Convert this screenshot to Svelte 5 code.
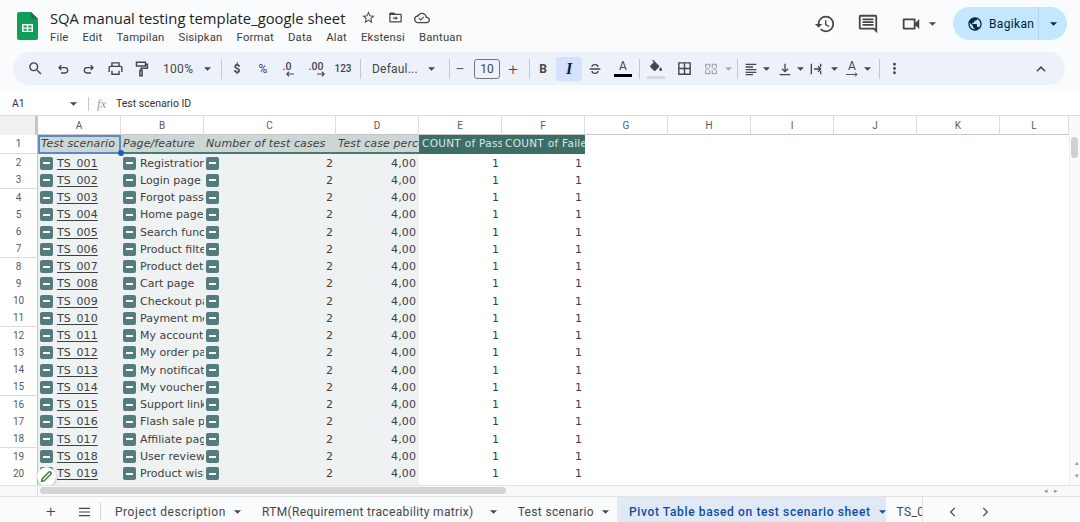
<script>
	const pages = [
		'Registration', 'Login page', 'Forgot password', 'Home page', 'Search function', 'Product filter',
		'Product detail', 'Cart page', 'Checkout page', 'Payment method', 'My account', 'My order page',
		'My notification', 'My voucher', 'Support link', 'Flash sale page', 'Affiliate page', 'User review',
		'Product wishlist', 'Product'
	];
	const menus = ['File', 'Edit', 'Tampilan', 'Sisipkan', 'Format', 'Data', 'Alat', 'Ekstensi', 'Bantuan'];
	const cols = ['A', 'B', 'C', 'D', 'E', 'F', 'G', 'H', 'I', 'J', 'K', 'L'];
	const tabs = [
		{ name: 'Project description' },
		{ name: 'RTM(Requirement traceability matrix)', wide: true },
		{ name: 'Test scenario' },
		{ name: 'Pivot Table based on test scenario sheet', active: true }
	];
	const rows = pages.map((page, i) => ({
		num: i + 2,
		id: 'TS_' + String(i + 1).padStart(3, '0'),
		page
	}));
</script>

{#snippet caret()}
	<svg class="caret" viewBox="0 0 8 4"><path d="M0 0h8L4 4z" /></svg>
{/snippet}

{#snippet chip()}
	<span class="chip"><i></i></span>
{/snippet}

<div class="app">
	<header class="top">
		<svg class="logo" viewBox="0 0 21 28">
			<path fill="#0f9d58" d="M2 0h12l7 7v19a2 2 0 0 1-2 2H2a2 2 0 0 1-2-2V2a2 2 0 0 1 2-2z" />
			<path fill="#0b7a43" d="M14 0l7 7h-5a2 2 0 0 1-2-2z" />
			<path fill="#fff" d="M5 12h11v8H5zm1.5 1.5v2h3.2v-2zm4.8 0v2h3.2v-2zm-4.8 3.2v2h3.2v-2zm4.8 0v2h3.2v-2z" fill-rule="evenodd" />
		</svg>
		<div class="doc">
			<div class="titleline">
				<span class="title">SQA manual testing template_google sheet</span>
				<svg class="ic14 star" viewBox="0 0 24 24"><path d="M22 9.24l-7.19-.62L12 2 9.19 8.63 2 9.24l5.46 4.73L5.82 21 12 17.27 18.18 21l-1.63-7.03L22 9.24zM12 15.4l-3.76 2.27 1-4.28-3.32-2.88 4.38-.38L12 6.1l1.71 4.04 4.38.38-3.32 2.88 1 4.28L12 15.4z" /></svg>
				<svg class="ic14 folder" viewBox="0 0 24 24"><path d="M20 6h-8l-2-2H4c-1.1 0-2 .9-2 2v12c0 1.1.9 2 2 2h16c1.1 0 2-.9 2-2V8c0-1.1-.9-2-2-2zm0 12H4V8h16v10zM12 16l4-3-4-3v2H8v2h4z" /></svg>
				<svg class="ic16 cloud" viewBox="0 0 24 24"><path d="M19.35 10.04C18.67 6.59 15.64 4 12 4 9.11 4 6.6 5.64 5.35 8.04 2.34 8.36 0 10.91 0 14c0 3.31 2.69 6 6 6h13c2.76 0 5-2.24 5-5 0-2.64-2.05-4.78-4.65-4.96zM19 18H6c-2.21 0-4-1.79-4-4 0-2.05 1.53-3.76 3.56-3.97l1.07-.11.5-.95C8.08 7.14 9.94 6 12 6c2.62 0 4.88 1.86 5.39 4.43l.3 1.5 1.53.11c1.56.1 2.78 1.41 2.78 2.96 0 1.65-1.35 3-3 3zM10 13.8L7.9 11.7l-1.1 1.1L10 16l5.2-5.2-1.1-1.1z" /></svg>
			</div>
			<nav class="menu">
				{#each menus as m}<span>{m}</span>{/each}
			</nav>
		</div>
		<div class="actions">
			<svg class="ic20" viewBox="0 0 24 24"><path d="M13 3a9 9 0 0 0-9 9H1l3.89 3.89.07.14L9 12H6c0-3.87 3.13-7 7-7s7 3.13 7 7-3.13 7-7 7c-1.93 0-3.68-.79-4.94-2.06l-1.42 1.42A8.954 8.954 0 0 0 13 21a9 9 0 0 0 0-18zm-1 5v5l4.28 2.54.72-1.21-3.5-2.08V8H12z" /></svg>
			<svg class="ic20 comment" viewBox="0 0 24 24"><path d="M21.99 4c0-1.1-.89-2-1.99-2H4c-1.1 0-2 .9-2 2v12c0 1.1.9 2 2 2h14l4 4-.01-18zM20 4v13.17L18.83 16H4V4h16zM6 12h12v2H6zm0-3h12v2H6zm0-3h12v2H6z" /></svg>
			<svg class="ic20 video" viewBox="0 0 24 24"><path d="M15 8v8H5V8h10m1-2H4c-.55 0-1 .45-1 1v10c0 .55.45 1 1 1h12c.55 0 1-.45 1-1v-3.5l4 4v-11l-4 4V7c0-.55-.45-1-1-1z" /></svg>
			<span class="videocaret">{@render caret()}</span>
			<div class="share">
				<div class="sharemain">
					<svg class="ic16" viewBox="0 0 24 24"><path d="M12 2C6.48 2 2 6.48 2 12s4.48 10 10 10 10-4.48 10-10S17.52 2 12 2zm-1 17.93c-3.95-.49-7-3.85-7-7.93 0-.62.08-1.21.21-1.79L9 15v1c0 1.1.9 2 2 2v1.93zm6.9-2.54c-.26-.81-1-1.39-1.9-1.39h-1v-3c0-.55-.45-1-1-1H8v-2h2c.55 0 1-.45 1-1V7h2c1.1 0 2-.9 2-2v-.41c2.93 1.19 5 4.06 5 7.41 0 2.08-.8 3.97-2.1 5.39z" /></svg>
					<span>Bagikan</span>
				</div>
				<div class="sharecaret">{@render caret()}</div>
			</div>
		</div>
	</header>

	<div class="toolbar">
		<span class="b w27"><svg class="ic18" viewBox="0 0 24 24"><path d="M15.5 14h-.79l-.28-.27A6.471 6.471 0 0 0 16 9.5 6.5 6.5 0 1 0 9.5 16c1.61 0 3.09-.59 4.23-1.57l.27.28v.79l5 4.99L20.49 19l-4.99-5zm-6 0C7.01 14 5 11.99 5 9.5S7.01 5 9.5 5 14 7.01 14 9.5 11.99 14 9.5 14z" /></svg></span>
		<span class="b w27"><svg class="st" viewBox="0 0 24 24"><path d="M9 18h6a4 4 0 0 0 0-8H6M9.500 6.500 6 10l3.500 3.500" /></svg></span>
		<span class="b w25"><svg class="st" viewBox="0 0 24 24"><path d="M15 18H9a4 4 0 0 1 0-8h9M14.500 6.500 18 10l-3.500 3.500" /></svg></span>
		<span class="b w28"><svg class="ic18" viewBox="0 0 24 24"><path d="M19 8h-1V3H6v5H5c-1.660 0-3 1.340-3 3v6h4v4h12v-4h4v-6c0-1.660-1.340-3-3-3zM8 5h8v3H8V5zm8 14H8v-4h8v4zm2-2v-2H6v2H4v-6c0-.55.45-1 1-1h14c.55 0 1 .45 1 1v6h-2z" /></svg></span>
		<span class="b w24"><svg class="st big" viewBox="0 0 24 24"><path d="M6 3h12v5H6zM18 5.500h2.500V11H12v3M10.500 14h3v7h-3z" /></svg></span>
		<span class="b zoom">100%</span>
		<span class="b w15">{@render caret()}</span>
		<i class="sep m7"></i>
		<span class="b w30 txt bold">$</span>
		<span class="b w22 txt">%</span>
		<span class="b w26 dec">.0<svg viewBox="0 0 10 6"><path d="M10 3H2M4.500.5 2 3l2.500 2.500" /></svg></span>
		<span class="b w32 dec">.00<svg viewBox="0 0 10 6"><path d="M0 3h8M5.500.5 8 3 5.500 5.500" /></svg></span>
		<span class="b w22 txt small">123</span>
		<i class="sep m6"></i>
		<span class="b font">Defaul...</span>
		<span class="b w14">{@render caret()}</span>
		<i class="sep m11"></i>
		<span class="b w20 sign">−</span>
		<span class="size">10</span>
		<span class="b w20 sign m3">+</span>
		<i class="sep m6"></i>
		<span class="b w26 txt bold">B</span>
		<span class="b w26 ital">I</span>
		<span class="b w26"><svg class="st" viewBox="0 0 24 24"><path d="M4 12h16M16.500 9c0-2-2-3.500-4.500-3.500S7.500 7 7.500 8.500M7.500 15c0 2 2 3.500 4.500 3.500s4.500-1.500 4.500-3.500" /></svg></span>
		<span class="b w26 m2 colorA">A<i></i></span>
		<i class="sep m3"></i>
		<span class="b w26 m3 fill"><svg class="ic16" viewBox="0 0 24 22"><path d="M16.560 8.940 7.620 0 6.210 1.410l2.380 2.380-5.150 5.150c-.59.59-.59 1.540 0 2.120l5.500 5.500c.29.29.68.44 1.060.44s.77-.15 1.060-.44l5.500-5.500c.59-.58.59-1.530 0-2.120zM19 11.500s-2 2.170-2 3.500c0 1.100.9 2 2 2s2-.9 2-2c0-1.330-2-3.500-2-3.500z" /></svg><i></i></span>
		<span class="b w26 m2"><svg class="ic18" viewBox="0 0 24 24"><path d="M3 3v18h18V3H3zm8 16H5v-6h6v6zm0-8H5V5h6v6zm8 8h-6v-6h6v6zm0-8h-6V5h6v6z" /></svg></span>
		<span class="b w26 m1 off"><svg class="st" viewBox="0 0 24 24"><path d="M4 10V5h6v5M14 10V5h6v5M4 14v5h6v-5M14 14v5h6v-5M4 12h5M15 12h5" /></svg></span>
		<span class="b w8 off">{@render caret()}</span>
		<i class="sep m5"></i>
		<span class="b w22 m2"><svg class="st" viewBox="0 0 24 24"><path d="M4 5h16M4 9h11M4 13h16M4 17h16M4 20.500h11" /></svg></span>
		<span class="b w8">{@render caret()}</span>
		<span class="b w22 m4"><svg class="st" viewBox="0 0 24 24"><path d="M12 4v12M7.500 11.500 12 16l4.500-4.500M4 20.500h16" /></svg></span>
		<span class="b w8">{@render caret()}</span>
		<span class="b w22 m1"><svg class="st" viewBox="0 0 24 24"><path d="M5 4v16M19 4v5M19 15v5M9 12h10M15 8l4 4-4 4" /></svg></span>
		<span class="b w8 m3">{@render caret()}</span>
		<span class="b w22 m3 rot">A<svg viewBox="0 0 14 5"><path d="M0 2.500h12M9.500.5l2.500 2-2.500 2" /></svg></span>
		<span class="b w8">{@render caret()}</span>
		<i class="sep m8"></i>
		<span class="b w20 m4"><svg class="ic18" viewBox="0 0 24 24"><path d="M12 8a2 2 0 1 0 0-4 2 2 0 0 0 0 4zm0 2a2 2 0 1 0 0 4 2 2 0 0 0 0-4zm0 6a2 2 0 1 0 0 4 2 2 0 0 0 0-4z" /></svg></span>
		<span class="b w20 collapse"><svg class="st big" viewBox="0 0 24 24"><path d="M6.500 15 12 9.500l5.500 5.500" /></svg></span>
	</div>

	<div class="formula">
		<span class="cellref">A1</span>
		<span class="refcaret">{@render caret()}</span>
		<i class="fsep"></i>
		<span class="fx">fx</span>
		<span class="ftext">Test scenario ID</span>
	</div>

	<div class="sheet">
		<div class="grid colhead">
			<div class="corner"></div>
			{#each cols as c}<div class="ch">{c}</div>{/each}
			<div class="vtop"></div>
		</div>

		<div class="body">
			<div class="cells">
				<div class="grid row head">
					<div class="rh">1</div>
					<div class="hc sel">Test scenario ID</div>
					<div class="hc">Page/feature</div>
					<div class="hc">Number of test cases</div>
					<div class="hc">Test case percentage</div>
					<div class="hc dark">COUNT of Passed</div>
					<div class="hc dark">COUNT of Failed</div>
				</div>
				{#each rows as r}
					<div class="grid row">
						<div class="rh">{r.num}</div>
						<div class="c tint">{@render chip()}<u>{r.id}</u></div>
						<div class="c tint page">{@render chip()}<span class="clip">{r.page}</span></div>
						<div class="c tint split">{@render chip()}<span>2</span></div>
						<div class="c tint end">4,00</div>
						<div class="c end">1</div>
						<div class="c end">1</div>
					</div>
				{/each}
				<span class="handle"></span>
				<span class="pencil">
					<svg viewBox="0 0 24 24"><path d="M3 21l1.200-5L16.500 3.700a1.800 1.800 0 0 1 2.500 0l1.300 1.300a1.800 1.800 0 0 1 0 2.500L8 19.800z" /></svg>
				</span>
			</div>
			<div class="vscroll"><i class="vthumb"></i><span class="varrows">▴<br />▾</span></div>
		</div>

		<div class="hscroll">
			<div class="hleft"></div>
			<i class="hthumb"></i>
			<span class="harrows">◂ ▸</span>
		</div>
	</div>

	<footer class="tabs">
		<span class="add">+</span>
		<svg class="all" viewBox="0 0 14 10"><path d="M1 1h12M1 5h12M1 9h12" /></svg>
		<i class="tsep"></i>
		{#each tabs as t}
			<div class="tab" class:active={t.active} class:wide={t.wide}>
				<span>{t.name}</span>{@render caret()}
			</div>
		{/each}
		<div class="tab cut"><span>TS_001</span></div>
		<div class="nav">
			<svg viewBox="0 0 24 24"><path d="M15 5l-7 7 7 7" /></svg>
			<svg viewBox="0 0 24 24"><path d="M9 5l7 7-7 7" /></svg>
		</div>
	</footer>
</div>

<style>
	:global(body) {
		margin: 0;
		background: #f9fbfd;
	}

	.app {
		width: 1080px;
		height: 522px;
		overflow: hidden;
		display: flex;
		flex-direction: column;
		font-family: Roboto, 'Noto Sans', sans-serif;
		color: #444746;
		background: #f9fbfd;
	}

	svg {
		fill: #444746;
		display: block;
		flex: none;
	}

	.ic14 { width: 15px; height: 15px; }
	.ic16 { width: 16px; height: 16px; }
	.ic18 { width: 17px; height: 17px; }
	.ic20 { width: 22px; height: 22px; }

	.caret {
		width: 7px;
		height: 4px;
	}

	/* title bar */
	.top {
		height: 52px;
		flex: none;
		display: flex;
		padding-left: 17px;
		box-sizing: border-box;
	}

	.logo {
		width: 21px;
		height: 28px;
		margin-top: 12px;
	}

	.doc {
		margin-left: 12px;
	}

	.titleline {
		display: flex;
		align-items: center;
		height: 21px;
		margin-top: 7px;
	}

	.title {
		font-family: 'Open Sans', sans-serif;
		font-size: 14.800px;
		color: #1f1f1f;
		width: 310px;
		white-space: nowrap;
	}

	.star { margin-left: 1px; }
	.folder { margin-left: 12px; }
	.cloud { margin-left: 11px; }

	.menu {
		display: flex;
		gap: 14px;
		font-size: 11.300px;
		letter-spacing: 0.2px;
		margin-top: 1px;
		height: 17px;
		line-height: 17px;
		color: #3c4043;
	}

	.actions {
		margin-left: auto;
		margin-right: 13px;
		display: flex;
		align-items: center;
		height: 33px;
		margin-top: 7px;
	}

	.comment { margin-left: 21px; }
	.video { margin-left: 21px; }
	.videocaret { margin-left: 7px; }

	.share {
		margin-left: 17px;
		width: 114px;
		height: 33px;
		border-radius: 17px;
		background: #c2e7ff;
		display: flex;
		color: #001d35;
	}

	.sharemain {
		width: 86px;
		padding-left: 14px;
		box-sizing: border-box;
		display: flex;
		align-items: center;
		gap: 6px;
		font-size: 12px;
		letter-spacing: 0.35px;
		border-right: 1px solid #aed6f1;
	}

	.share svg { fill: #0b2a40; }

	.sharecaret {
		flex: 1;
		display: flex;
		align-items: center;
		justify-content: center;
	}

	/* toolbar */
	.toolbar {
		height: 33px;
		flex: none;
		margin: 0 15px 0 13px;
		padding-left: 9px;
		border-radius: 17px;
		background: #edf2fa;
		display: flex;
		align-items: center;
		font-size: 12px;
	}

	.b {
		height: 24px;
		flex: none;
		display: flex;
		align-items: center;
		justify-content: center;
		border-radius: 3px;
	}

	.w8 { width: 8px; }
	.w14 { width: 14px; }
	.w15 { width: 15px; }
	.w20 { width: 20px; }
	.w22 { width: 22px; }
	.w24 { width: 24px; }
	.w25 { width: 25px; }
	.w26 { width: 26px; }
	.w27 { width: 27px; }
	.w28 { width: 28px; }
	.w30 { width: 30px; }
	.w32 { width: 32px; }
	.m1 { margin-left: 1px; }
	.m2 { margin-left: 2px; }
	.m3 { margin-left: 3px; }
	.m4 { margin-left: 4px; }
	.m5 { margin-left: 5px; }
	.m6 { margin-left: 6px; }
	.m7 { margin-left: 6px; }
	.m8 { margin-left: 8px; }
	.m11 { margin-left: 11px; }

	.st {
		width: 16px;
		height: 16px;
		fill: none;
		stroke: #444746;
		stroke-width: 2;
	}

	.st.big {
		width: 18px;
		height: 18px;
	}

	.sep {
		width: 1px;
		height: 20px;
		background: #c7c7c7;
		flex: none;
	}

	.zoom {
		width: 47px;
		justify-content: flex-start;
		padding-left: 10px;
		box-sizing: border-box;
		letter-spacing: 0.3px;
	}

	.txt { font-size: 12px; }
	.bold { font-weight: 700; }
	.small { font-size: 10px; font-weight: 500; }

	.dec {
		position: relative;
		font-size: 10.500px;
		font-weight: 500;
		padding-bottom: 5px;
		box-sizing: border-box;
	}

	.dec svg {
		position: absolute;
		right: 6px;
		bottom: 4px;
		width: 9px;
		height: 6px;
		fill: none;
		stroke: #444746;
		stroke-width: 1.200;
	}

	.font {
		width: 63px;
		justify-content: flex-start;
		padding-left: 11px;
		box-sizing: border-box;
		letter-spacing: 0.2px;
	}

	.sign {
		font-size: 17px;
		font-weight: 300;
	}

	.size {
		width: 26px;
		height: 20px;
		margin-left: 4px;
		box-sizing: border-box;
		border: 1px solid #747775;
		border-radius: 3px;
		text-align: center;
		line-height: 18px;
		font-size: 12px;
	}

	.ital {
		background: #d3e3fd;
		font-family: 'Liberation Serif', serif;
		font-style: italic;
		font-weight: 700;
		font-size: 16px;
		color: #041e49;
	}

	.colorA {
		flex-direction: column;
		font-size: 12px;
		line-height: 13px;
		color: #444746;
	}

	.colorA i {
		width: 18px;
		height: 3px;
		background: #000;
		margin-top: 1px;
	}

	.fill {
		flex-direction: column;
	}

	.fill i {
		width: 18px;
		height: 3px;
		background: #d5d9dd;
		margin-top: 1px;
	}

	.off { opacity: 0.4; }

	.rot {
		flex-direction: column;
		font-size: 12px;
		line-height: 11px;
	}

	.rot svg {
		width: 13px;
		height: 5px;
		fill: none;
		stroke: #444746;
	}

	.collapse {
		margin-left: auto;
		margin-right: 14px;
	}

	/* formula bar */
	.formula {
		height: 23px;
		flex: none;
		margin-top: 7px;
		background: #fff;
		display: flex;
		align-items: center;
		font-size: 10.500px;
		color: #333;
	}

	.cellref {
		width: 69px;
		padding-left: 12px;
		box-sizing: border-box;
	}

	.refcaret { margin-left: 1px; }

	.fsep {
		width: 1px;
		height: 14px;
		background: #c7c7c7;
		margin-left: 11px;
	}

	.fx {
		font-family: 'Liberation Serif', serif;
		font-style: italic;
		font-size: 13px;
		color: #9aa0a6;
		margin-left: 8px;
		width: 19px;
	}

	/* sheet */
	.sheet {
		flex: none;
		height: 382px;
		background: #fff;
		display: flex;
		flex-direction: column;
		overflow: hidden;
	}

	.grid {
		display: grid;
		grid-template-columns: 38px 83px 83px 132px repeat(8, 83px) 69px 11px;
	}

	.colhead {
		height: 20px;
		flex: none;
		box-sizing: border-box;
		border-top: 1px solid #dadce0;
		border-bottom: 1px solid #c7c7c7;
		background: #fff;
	}

	.corner {
		background: #f1f1f1;
		border-right: 3px solid #c4c7c5;
	}

	.ch {
		border-right: 1px solid #dadce0;
		text-align: center;
		font-size: 10px;
		line-height: 19px;
		color: #575b5f;
	}

	.vtop { background: #f8f9fa; }

	.body {
		flex: 1;
		min-height: 0;
		position: relative;
		overflow: hidden;
	}

	.cells {
		position: relative;
	}

	.row {
		height: 17.270px;
		box-sizing: border-box;
		font-family: 'DejaVu Sans', sans-serif;
		font-size: 11px;
		line-height: 17px;
		color: #3f3f3f;
	}

	.row.head {
		height: 19px;
		line-height: 17px;
	}

	.rh {
		font-family: Roboto, sans-serif;
		font-size: 10px;
		text-align: center;
		color: #575b5f;
		background: #fff;
		border-bottom: 1px solid #dadce0;
		border-right: 1px solid #c7c7c7;
	}

	.hc {
		background: #ccd6d4;
		font-style: italic;
		padding-left: 2px;
		white-space: nowrap;
		overflow: hidden;
		letter-spacing: 0.1px;
		box-sizing: border-box;
		border-bottom: 2px solid #4a7a73;
	}

	.hc.dark {
		background: #3d6e66;
		color: #dce6e4;
		font-style: normal;
		font-size: 10.500px;
		letter-spacing: 0.3px;
		padding-left: 3px;
		border-bottom: 0;
		line-height: 17px;
	}

	.hc.sel {
		outline: 2px solid #5b8ac9;
		outline-offset: -2px;
		position: relative;
		padding-left: 3px;
		border-right: 4px solid #ccd6d4;
		letter-spacing: 0.15px;
	}

	.c {
		display: flex;
		align-items: center;
		white-space: nowrap;
		overflow: hidden;
		padding: 0 3px 0 2px;
		letter-spacing: 0.1px;
	}

	.c.page {
		padding-right: 0;
		letter-spacing: 0;
	}

	.tint { background: #eef2f3; }

	.end { justify-content: flex-end; }

	.split { justify-content: space-between; }

	.chip {
		width: 13px;
		height: 13px;
		flex: none;
		border-radius: 2px;
		background: #547b7e;
		display: flex;
		align-items: center;
		justify-content: center;
		margin-right: 4px;
	}

	.chip i {
		width: 7px;
		height: 2px;
		background: #fff;
	}

	u { text-underline-offset: 2px; }

	.clip {
		overflow: hidden;
	}

	.handle {
		position: absolute;
		left: 118px;
		top: 15px;
		width: 6px;
		height: 6px;
		border-radius: 50%;
		background: #1a5fb4;
	}

	.pencil {
		position: absolute;
		left: 37px;
		top: 332px;
		width: 19px;
		height: 19px;
		border-radius: 50%;
		background: #fff;
		box-shadow: 0 1px 3px rgba(0, 0, 0, 0.25);
		display: flex;
		align-items: center;
		justify-content: center;
	}

	.pencil svg {
		width: 13px;
		height: 13px;
		fill: none;
		stroke: #2e7d32;
		stroke-width: 2.500;
	}

	.vscroll {
		position: absolute;
		right: 0;
		top: 0;
		bottom: 0;
		width: 11px;
		background: #fafafa;
		border-left: 1px solid #eee;
		box-sizing: border-box;
	}

	.vthumb {
		display: block;
		width: 7px;
		height: 21px;
		margin: 2px 0 0 1px;
		border-radius: 4px;
		background: #d0d0d0;
	}

	.varrows {
		position: absolute;
		right: 1px;
		bottom: 2px;
		font-size: 7px;
		line-height: 13px;
		color: #999;
	}

	.hscroll {
		height: 12px;
		flex: none;
		position: relative;
		background: #f8f9fa;
		border-top: 1px solid #e3e3e3;
		border-bottom: 1px solid #e3e3e3;
		box-sizing: border-box;
	}

	.hleft {
		position: absolute;
		left: 0;
		top: 0;
		bottom: 0;
		width: 37px;
		border-right: 1px solid #dadce0;
	}

	.hthumb {
		position: absolute;
		left: 40px;
		top: 1px;
		width: 466px;
		height: 7px;
		border-radius: 4px;
		background: #d4d4d4;
	}

	.harrows {
		position: absolute;
		left: 1044px;
		top: 0;
		font-size: 7px;
		line-height: 10px;
		color: #999;
		word-spacing: 4px;
	}

	/* sheet tabs */
	.tabs {
		flex: 1;
		display: flex;
		align-items: stretch;
		font-size: 12px;
		letter-spacing: 0.35px;
		color: #444746;
		position: relative;
	}

	.add {
		width: 14px;
		margin-left: 44px;
		text-align: center;
		font-size: 17px;
		font-weight: 300;
		line-height: 29px;
	}

	.all {
		width: 13px;
		height: 10px;
		margin: 10px 0 0 20px;
		fill: none;
		stroke: #444746;
		stroke-width: 1.300;
	}

	.tsep {
		width: 1px;
		height: 18px;
		margin: 5px 0 0 9px;
		background: #d5d5d5;
	}

	.tab {
		display: flex;
		align-items: center;
		gap: 8px;
		padding: 1px 10px 0 11px;
		white-space: nowrap;
		overflow: hidden;
		flex: none;
	}

	.tab:first-of-type {
		margin-left: 3px;
		letter-spacing: 0.55px;
	}

	.tab.wide { gap: 16px; }

	.tab.active {
		background: #e1e9f7;
		color: #0b4f9e;
		font-weight: 500;
		letter-spacing: 0.62px;
		padding: 1px 0 0 12px;
		margin-left: -2px;
	}

	.tab.active .caret { fill: #0b4f9e; }

	.tab.cut {
		padding: 1px 0 0 11px;
		border-right: 1px solid #e0e0e0;
		width: 25px;
	}

	.nav {
		display: flex;
		gap: 18px;
		align-items: center;
		margin-left: 23px;
		padding-top: 1px;
	}

	.nav svg {
		width: 14px;
		height: 14px;
		fill: none;
		stroke: #444746;
		stroke-width: 2;
	}
</style>
